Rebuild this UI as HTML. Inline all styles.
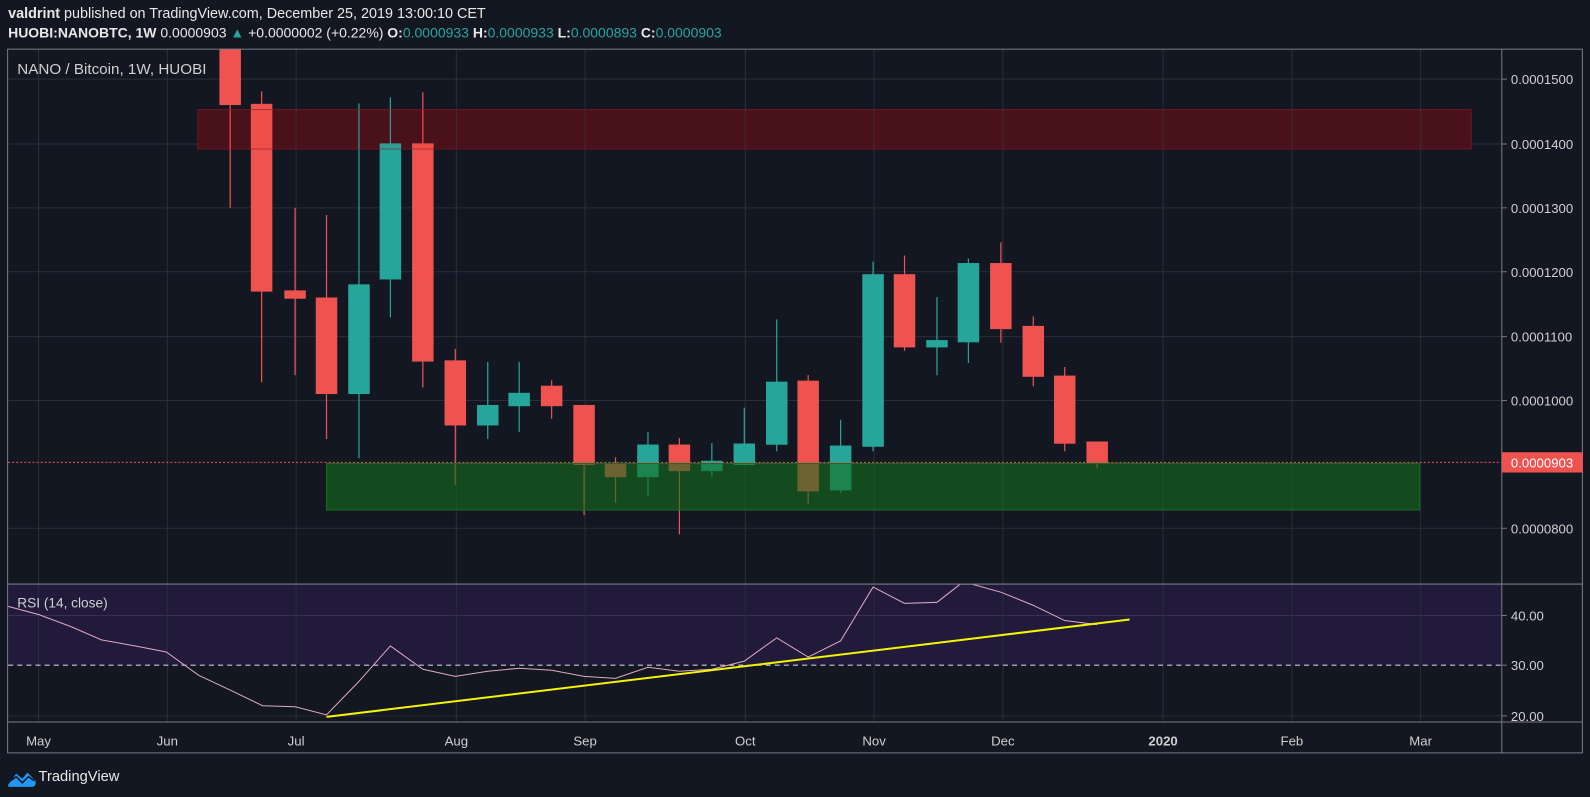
<!DOCTYPE html>
<html><head><meta charset="utf-8"><style>
html,body{margin:0;padding:0;background:#131722;overflow:hidden}
svg{display:block}
text{font-family:"Liberation Sans",sans-serif}
</style></head><body>
<svg width="1590" height="797" viewBox="0 0 1568 786" preserveAspectRatio="none" xmlns="http://www.w3.org/2000/svg">
<rect width="1568" height="786" fill="#131722"/>
<text x="8" y="18" font-size="14.2" fill="#e8e8e8"><tspan font-weight="bold">valdrint</tspan> published on TradingView.com, December 25, 2019 13:00:10 CET</text>
<text x="8" y="37" font-size="13.8" fill="#e8e8e8"><tspan font-weight="bold">HUOBI:NANOBTC, 1W</tspan> 0.0000903 <tspan fill="#26a69a">▲</tspan> +0.0000002 (+0.22%) <tspan font-weight="bold">O:</tspan><tspan fill="#26a69a">0.0000933</tspan> <tspan font-weight="bold">H:</tspan><tspan fill="#26a69a">0.0000933</tspan> <tspan font-weight="bold">L:</tspan><tspan fill="#26a69a">0.0000893</tspan> <tspan font-weight="bold">C:</tspan><tspan fill="#26a69a">0.0000903</tspan></text>
<rect x="8" y="576" width="1473" height="80" fill="#211a3b"/>
<g stroke="#2a2e39" stroke-width="1">
<line x1="8" y1="78" x2="1481" y2="78"/><line x1="8" y1="142" x2="1481" y2="142"/><line x1="8" y1="205" x2="1481" y2="205"/><line x1="8" y1="268" x2="1481" y2="268"/><line x1="8" y1="332" x2="1481" y2="332"/><line x1="8" y1="395" x2="1481" y2="395"/><line x1="8" y1="521" x2="1481" y2="521"/>
<line x1="8" y1="607" x2="1481" y2="607" stroke="#3a2f55"/><line x1="8" y1="706" x2="1481" y2="706"/>
</g>
<rect x="195" y="108" width="1256" height="39" fill="#40141d"/>
<g stroke="#2a2e39">
<line x1="38" y1="48" x2="38" y2="712"/><line x1="165" y1="48" x2="165" y2="712"/><line x1="292" y1="48" x2="292" y2="712"/><line x1="450" y1="48" x2="450" y2="712"/><line x1="577" y1="48" x2="577" y2="712"/><line x1="735" y1="48" x2="735" y2="712"/><line x1="862" y1="48" x2="862" y2="712"/><line x1="989" y1="48" x2="989" y2="712"/><line x1="1147" y1="48" x2="1147" y2="712"/><line x1="1274" y1="48" x2="1274" y2="712"/><line x1="1401" y1="48" x2="1401" y2="712"/>
</g>
<line x1="8" y1="656" x2="1481" y2="656" stroke="#c8c8d8" stroke-dasharray="5,4"/>
<svg x="8" y="48" width="1473" height="521" viewBox="8 48 1473 521" overflow="hidden">
<g stroke-width="1.2">
<g stroke="#ef5350" fill="#ef5350">
<line x1="227" y1="40" x2="227" y2="205"/><rect x="217" y="30" width="20" height="73"/>
<line x1="258" y1="90" x2="258" y2="377"/><rect x="248" y="103" width="20" height="184"/>
<line x1="291" y1="205" x2="291" y2="370"/><rect x="281" y="287" width="20" height="7"/>
<line x1="322" y1="212" x2="322" y2="433"/><rect x="312" y="294" width="20" height="94"/>
<line x1="417" y1="91" x2="417" y2="382"/><rect x="407" y="142" width="20" height="214"/>
<line x1="449" y1="344" x2="449" y2="478"/><rect x="439" y="356" width="20" height="63"/>
<line x1="544" y1="375" x2="544" y2="413"/><rect x="534" y="381" width="20" height="19"/>
<line x1="576" y1="400" x2="576" y2="508"/><rect x="566" y="400" width="20" height="58"/>
<line x1="670" y1="432" x2="670" y2="527"/><rect x="660" y="439" width="20" height="25"/>
<line x1="797" y1="370" x2="797" y2="497"/><rect x="787" y="376" width="20" height="108"/>
<line x1="892" y1="252" x2="892" y2="346"/><rect x="882" y="271" width="20" height="71"/>
<line x1="987" y1="239" x2="987" y2="338"/><rect x="977" y="260" width="20" height="64"/>
<line x1="1019" y1="312" x2="1019" y2="381"/><rect x="1009" y="322" width="20" height="49"/>
<line x1="1050" y1="362" x2="1050" y2="445"/><rect x="1040" y="371" width="20" height="66"/>
<line x1="1082" y1="436" x2="1082" y2="462"/><rect x="1072" y="436" width="20" height="20"/>
</g>
<g stroke="#26a69a" fill="#26a69a">
<line x1="354" y1="102" x2="354" y2="452"/><rect x="344" y="281" width="20" height="107"/>
<line x1="385" y1="96" x2="385" y2="313"/><rect x="375" y="142" width="20" height="133"/>
<line x1="481" y1="357" x2="481" y2="433"/><rect x="471" y="400" width="20" height="19"/>
<line x1="512" y1="357" x2="512" y2="426"/><rect x="502" y="388" width="20" height="12"/>
<line x1="639" y1="426" x2="639" y2="489"/><rect x="629" y="439" width="20" height="31"/>
<line x1="702" y1="437" x2="702" y2="470"/><rect x="692" y="455" width="20" height="9"/>
<line x1="734" y1="402" x2="734" y2="458"/><rect x="724" y="438" width="20" height="20"/>
<line x1="766" y1="315" x2="766" y2="445"/><rect x="756" y="377" width="20" height="61"/>
<line x1="829" y1="414" x2="829" y2="486"/><rect x="819" y="440" width="20" height="43"/>
<line x1="861" y1="258" x2="861" y2="445"/><rect x="851" y="271" width="20" height="169"/>
<line x1="924" y1="293" x2="924" y2="370"/><rect x="914" y="336" width="20" height="6"/>
<line x1="955" y1="255" x2="955" y2="358"/><rect x="945" y="260" width="20" height="77"/>
</g>
<g stroke="#ef5350" fill="#ef5350"><line x1="607" y1="451" x2="607" y2="496"/><rect x="597" y="458" width="20" height="12"/></g>
</g>
<rect x="195" y="108" width="1256" height="39" fill="rgba(255,0,0,0.05)" stroke="rgba(140,25,35,0.6)"/>
<rect x="322" y="457" width="1078" height="46" fill="rgba(20,110,30,0.6)" stroke="#1a6b25"/>
</svg>
<line x1="8" y1="456" x2="1481" y2="456" stroke="#ef5350" stroke-dasharray="2,2"/>
<polyline fill="none" stroke="#e1a9c4" stroke-width="1" points="8,598 38,606 70,618 100,631 133,637 164,643 196,666 228,681 259,696 291,697 322,705 354,672 385,637 417,660 449,667 481,662 512,659 544,661 576,667 607,669 639,658 670,662 702,660 734,652 766,629 797,648 829,632 861,579 892,595 924,594 947,576 958,576 987,584 1019,597 1050,612 1082,616"/>
<line x1="322" y1="707" x2="1114" y2="611" stroke="#f5f500" stroke-width="2"/>
<text x="17" y="599" font-size="13.5" fill="#d0d0d0">RSI (14, close)</text>
<text x="17" y="73" font-size="15" fill="#d0d0d0">NANO / Bitcoin, 1W, HUOBI</text>
<g fill="none" stroke="#787b86" stroke-width="1">
<rect x="7.5" y="48.5" width="1553" height="694"/>
<line x1="1481" y1="48" x2="1481" y2="743"/>
<line x1="8" y1="576" x2="1561" y2="576"/>
<line x1="8" y1="712" x2="1561" y2="712"/>
</g>
<g font-size="13" fill="#d0d0d0">
<text x="1490" y="83">0.0001500</text><text x="1490" y="147">0.0001400</text><text x="1490" y="210">0.0001300</text><text x="1490" y="273">0.0001200</text><text x="1490" y="337">0.0001100</text><text x="1490" y="400">0.0001000</text><text x="1490" y="526">0.0000800</text>
<text x="1490" y="612">40.00</text><text x="1490" y="661">30.00</text><text x="1490" y="711">20.00</text>
</g>
<g stroke="#787b86"><line x1="1481" y1="78" x2="1486" y2="78"/><line x1="1481" y1="142" x2="1486" y2="142"/><line x1="1481" y1="205" x2="1486" y2="205"/><line x1="1481" y1="268" x2="1486" y2="268"/><line x1="1481" y1="332" x2="1486" y2="332"/><line x1="1481" y1="395" x2="1486" y2="395"/><line x1="1481" y1="521" x2="1486" y2="521"/><line x1="1481" y1="607" x2="1486" y2="607"/><line x1="1481" y1="656" x2="1486" y2="656"/><line x1="1481" y1="706" x2="1486" y2="706"/></g>
<rect x="1481" y="446" width="80" height="20" fill="#ef5350"/>
<text x="1490" y="461" font-size="13" fill="#fff">0.0000903</text>
<g font-size="13" fill="#d0d0d0" text-anchor="middle">
<text x="38" y="735">May</text><text x="165" y="735">Jun</text><text x="292" y="735">Jul</text><text x="450" y="735">Aug</text><text x="577" y="735">Sep</text><text x="735" y="735">Oct</text><text x="862" y="735">Nov</text><text x="989" y="735">Dec</text><text x="1147" y="735" font-weight="bold">2020</text><text x="1274" y="735">Feb</text><text x="1401" y="735">Mar</text>
</g>
<path d="M8,774 L16,763 L22,768 L27,762 L35,770 Q36,776 31,776 L10,776 Q7,776 8,774 Z" fill="#2196f3"/>
<polyline points="9,771 16,766 22,772 28,766 34,770" fill="none" stroke="#131722" stroke-width="1.5"/>
<text x="38" y="770" font-size="14.5" fill="#e8e8e8">TradingView</text>
</svg>
</body></html>
